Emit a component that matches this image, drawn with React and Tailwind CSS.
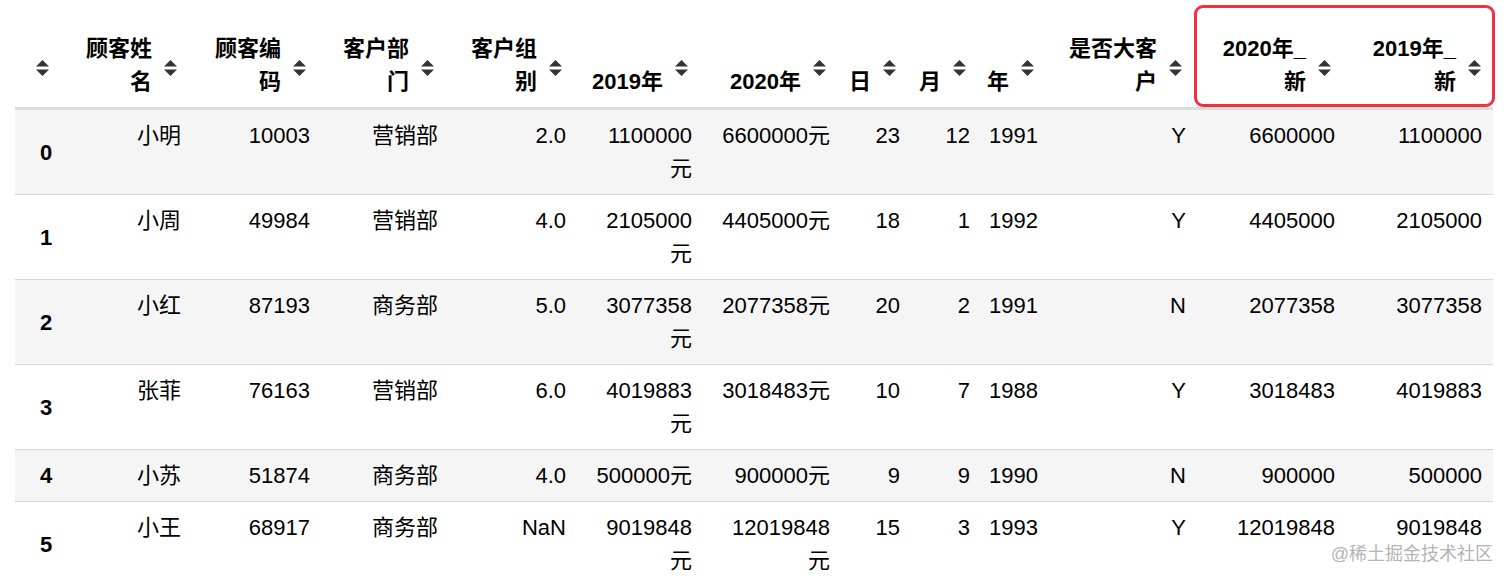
import React from 'react';

const FONT = '"Liberation Sans", "Noto Sans CJK SC", sans-serif';

const columns = [
  { key: 'name', label: ['顾客姓', '名'], width: 114 },
  { key: 'code', label: ['顾客编', '码'], width: 129 },
  { key: 'dept', label: ['客户部', '门'], width: 128 },
  { key: 'group', label: ['客户组', '别'], width: 128 },
  { key: 'y2019', label: ['2019年'], width: 126 },
  { key: 'y2020', label: ['2020年'], width: 138 },
  { key: 'day', label: ['日'], width: 70 },
  { key: 'month', label: ['月'], width: 70 },
  { key: 'year', label: ['年'], width: 68 },
  { key: 'big', label: ['是否大客', '户'], width: 148 },
  { key: 'n2020', label: ['2020年_', '新'], width: 149 },
  { key: 'n2019', label: ['2019年_', '新'], width: 150 },
];

const rows = [
  ['小明', '10003', '营销部', '2.0', ['1100000', '元'], ['6600000元'], '23', '12', '1991', 'Y', '6600000', '1100000'],
  ['小周', '49984', '营销部', '4.0', ['2105000', '元'], ['4405000元'], '18', '1', '1992', 'Y', '4405000', '2105000'],
  ['小红', '87193', '商务部', '5.0', ['3077358', '元'], ['2077358元'], '20', '2', '1991', 'N', '2077358', '3077358'],
  ['张菲', '76163', '营销部', '6.0', ['4019883', '元'], ['3018483元'], '10', '7', '1988', 'Y', '3018483', '4019883'],
  ['小苏', '51874', '商务部', '4.0', ['500000元'], ['900000元'], '9', '9', '1990', 'N', '900000', '500000'],
  ['小王', '68917', '商务部', 'NaN', ['9019848', '元'], ['12019848', '元'], '15', '3', '1993', 'Y', '12019848', '9019848'],
];

function SortIcon({ className }) {
  return (
    <svg width="15" height="17" viewBox="0 0 15 17" className={className}>
      <path d="M7.5 0.5 L14 7 L1 7 Z" fill="#333" />
      <path d="M7.5 16.5 L14 10 L1 10 Z" fill="#333" />
    </svg>
  );
}

function Lines({ value }) {
  const parts = Array.isArray(value) ? value : [value];
  return parts.map((p, i) => (
    <React.Fragment key={i}>
      {i > 0 && <br />}
      {p}
    </React.Fragment>
  ));
}

export default function App() {
  return (
    <div className="relative w-[1512px] h-[585px] bg-white overflow-hidden pt-[32px] pl-[15px] text-black" style={{ fontFamily: FONT }}>
      <table className="table-fixed border-collapse text-[22px] leading-[33px]">
        <colgroup>
          <col style={{ width: 60 }} />
          {columns.map(c => (
            <col key={c.key} style={{ width: c.width }} />
          ))}
        </colgroup>
        <thead>
          <tr className="border-b-[3px] border-[#dcdcdc]">
            <th className="relative align-bottom pb-[9px]">
              <SortIcon className="absolute left-[20px] top-1/2 -translate-y-1/2 mt-[-2px]" />
            </th>
            {columns.map(c => (
              <th key={c.key} className="relative align-bottom text-right font-bold pr-[37px] pl-[8px] pb-[9px] whitespace-nowrap">
                <Lines value={c.label} />
                <SortIcon className="absolute right-[11px] top-1/2 -translate-y-1/2 mt-[-2px]" />
              </th>
            ))}
          </tr>
        </thead>
        <tbody>
          {rows.map((r, i) => (
            <tr key={i} className={`border-b border-[#d6d6d6] ${i % 2 === 0 ? 'bg-[#f5f5f5]' : 'bg-white'}`}>
              <th className="align-middle text-left font-bold pl-[25px] py-[9px]">{i}</th>
              {r.map((v, j) => (
                <td key={j} className={`align-top text-right whitespace-nowrap py-[9px] pl-[8px] ${j === r.length - 1 ? 'pr-[11px]' : 'pr-[8px]'}`}>
                  <Lines value={v} />
                </td>
              ))}
            </tr>
          ))}
        </tbody>
      </table>

      {/* highlight box drawn over the last two headers */}
      <div className="absolute left-[1194px] top-[5px] w-[301px] h-[102px] border-[3px] border-[#f0313f] rounded-[9px] pointer-events-none" />

      <div className="absolute right-[19px] top-[541px] text-[18px] leading-[26px] text-[#b4b4b4]">@稀土掘金技术社区</div>
    </div>
  );
}
